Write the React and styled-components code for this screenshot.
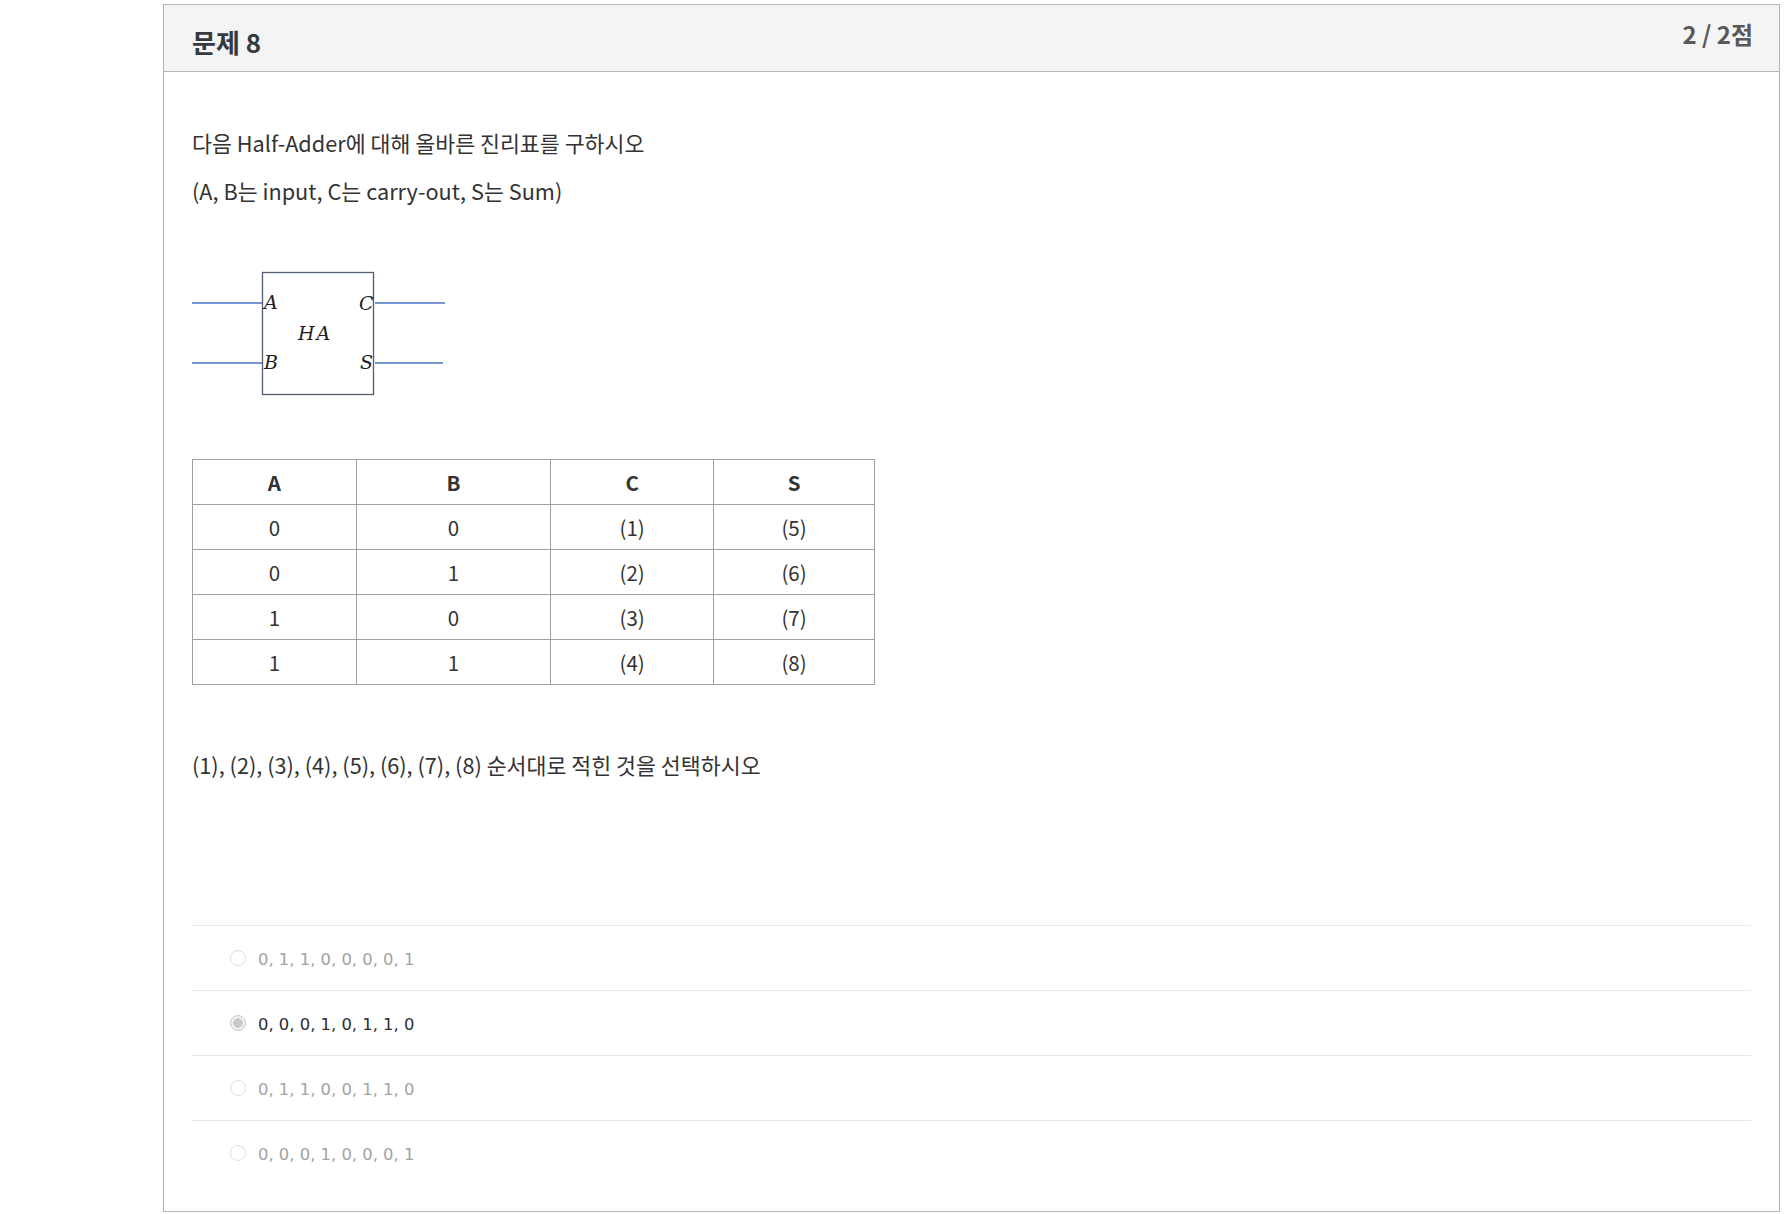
import styled, { createGlobalStyle } from "styled-components";

const GlobalStyle = createGlobalStyle`
  html, body {
    margin: 0;
    padding: 0;
    background: #ffffff;
  }
  body {
    font-family: "Noto Sans CJK KR", "Noto Sans", sans-serif;
    color: #333333;
  }
`;

const Page = styled.div`
  padding: 4px 8px 0 163px;
`;

const Card = styled.section`
  border: 1px solid #b5b5b5;
  background: #ffffff;
`;

const Header = styled.header`
  display: flex;
  justify-content: space-between;
  align-items: flex-start;
  height: 66px;
  padding: 0 26px 0 28px;
  background: #f4f4f4;
  border-bottom: 1px solid #b5b5b5;
`;

const Title = styled.h2`
  margin: 18px 0 0;
  font-size: 26px;
  line-height: 38px;
  font-weight: 700;
  color: #343a40;
`;

const Score = styled.span`
  margin-top: 12px;
  font-size: 24px;
  line-height: 34px;
  font-weight: 700;
  color: #595959;
`;

const Body = styled.div`
  padding: 56px 28px 26px 28px;
`;

const Paragraph = styled.p`
  margin: 0 0 ${(p) => p.$gap || 0}px;
  font-size: 21.7px;
  line-height: 30px;
  color: #333333;
`;

const Diagram = styled.svg`
  display: block;
  margin-bottom: 62px;
`;

const Table = styled.table`
  border-collapse: collapse;
  width: 683px;
  margin-bottom: 65px;
  font-size: 20.5px;
  color: #333333;
`;

const Cell = styled.td`
  width: ${(p) => p.$w}px;
  height: 44px;
  padding: 0;
  border: 1px solid #a0a0a0;
  text-align: center;
  font-weight: ${(p) => (p.$head ? 700 : 400)};
`;

const Options = styled.ul`
  list-style: none;
  margin: 145px 0 0;
  padding: 0;
`;

const Option = styled.li`
  display: flex;
  align-items: center;
  gap: 12px;
  box-sizing: border-box;
  height: 65px;
  padding: 3px 0 0 38px;
  border-top: 1px solid #e9e9e9;
  font-family: "DejaVu Sans", sans-serif;
  font-size: 16.4px;
  color: ${(p) => (p.$checked ? "#2b2f33" : "#a3a3a3")};
`;

const Radio = styled.span`
  box-sizing: border-box;
  width: 16px;
  height: 16px;
  margin-top: -4px;
  border-radius: 50%;
  border: 1px solid ${(p) => (p.$checked ? "#c4c4c4" : "#dedede")};
  background: ${(p) =>
    p.$checked
      ? "radial-gradient(circle, #c9c9c9 0 4.5px, #f2f2f2 5px)"
      : "#ffffff"};
  flex-shrink: 0;
`;

const widths = [164, 195, 163, 161];
const rows = [
  ["A", "B", "C", "S"],
  ["0", "0", "(1)", "(5)"],
  ["0", "1", "(2)", "(6)"],
  ["1", "0", "(3)", "(7)"],
  ["1", "1", "(4)", "(8)"],
];

const choices = [
  "0, 1, 1, 0, 0, 0, 0, 1",
  "0, 0, 0, 1, 0, 1, 1, 0",
  "0, 1, 1, 0, 0, 1, 1, 0",
  "0, 0, 0, 1, 0, 0, 0, 1",
];

const HalfAdder = () => (
  <Diagram width="260" height="128" viewBox="0 0 260 128">
    <g stroke="#4a74c0" strokeWidth="1.3">
      <line x1="0" y1="34" x2="70" y2="34" />
      <line x1="0" y1="94" x2="70" y2="94" />
      <line x1="183" y1="34" x2="253" y2="34" />
      <line x1="183" y1="94" x2="251" y2="94" />
    </g>
    <rect x="70.5" y="3.5" width="111" height="122" fill="none" stroke="#4f5d73" strokeWidth="1.3" />
    <g fontFamily="'DejaVu Serif', 'Liberation Serif', serif" fontStyle="italic" fontSize="19" fill="#1e1e1e">
      <text x="72" y="40">A</text>
      <text x="167" y="41">C</text>
      <text x="106" y="71" letterSpacing="2">HA</text>
      <text x="72" y="100">B</text>
      <text x="168" y="100">S</text>
    </g>
  </Diagram>
);

export default function App() {
  return (
    <>
      <GlobalStyle />
      <Page>
        <Card>
          <Header>
            <Title>문제 8</Title>
            <Score>2 / 2점</Score>
          </Header>
          <Body>
            <Paragraph $gap={18}>다음 Half-Adder에 대해 올바른 진리표를 구하시오</Paragraph>
            <Paragraph $gap={63}>(A, B는 input, C는 carry-out, S는 Sum)</Paragraph>
            <HalfAdder />
            <Table>
              <tbody>
                {rows.map((row, r) => (
                  <tr key={r}>
                    {row.map((v, c) => (
                      <Cell key={c} $w={widths[c]} $head={r === 0}>
                        {v}
                      </Cell>
                    ))}
                  </tr>
                ))}
              </tbody>
            </Table>
            <Paragraph>(1), (2), (3), (4), (5), (6), (7), (8) 순서대로 적힌 것을 선택하시오</Paragraph>
            <Options>
              {choices.map((c, i) => (
                <Option key={i} $checked={i === 1}>
                  <Radio $checked={i === 1} />
                  {c}
                </Option>
              ))}
            </Options>
          </Body>
        </Card>
      </Page>
    </>
  );
}
